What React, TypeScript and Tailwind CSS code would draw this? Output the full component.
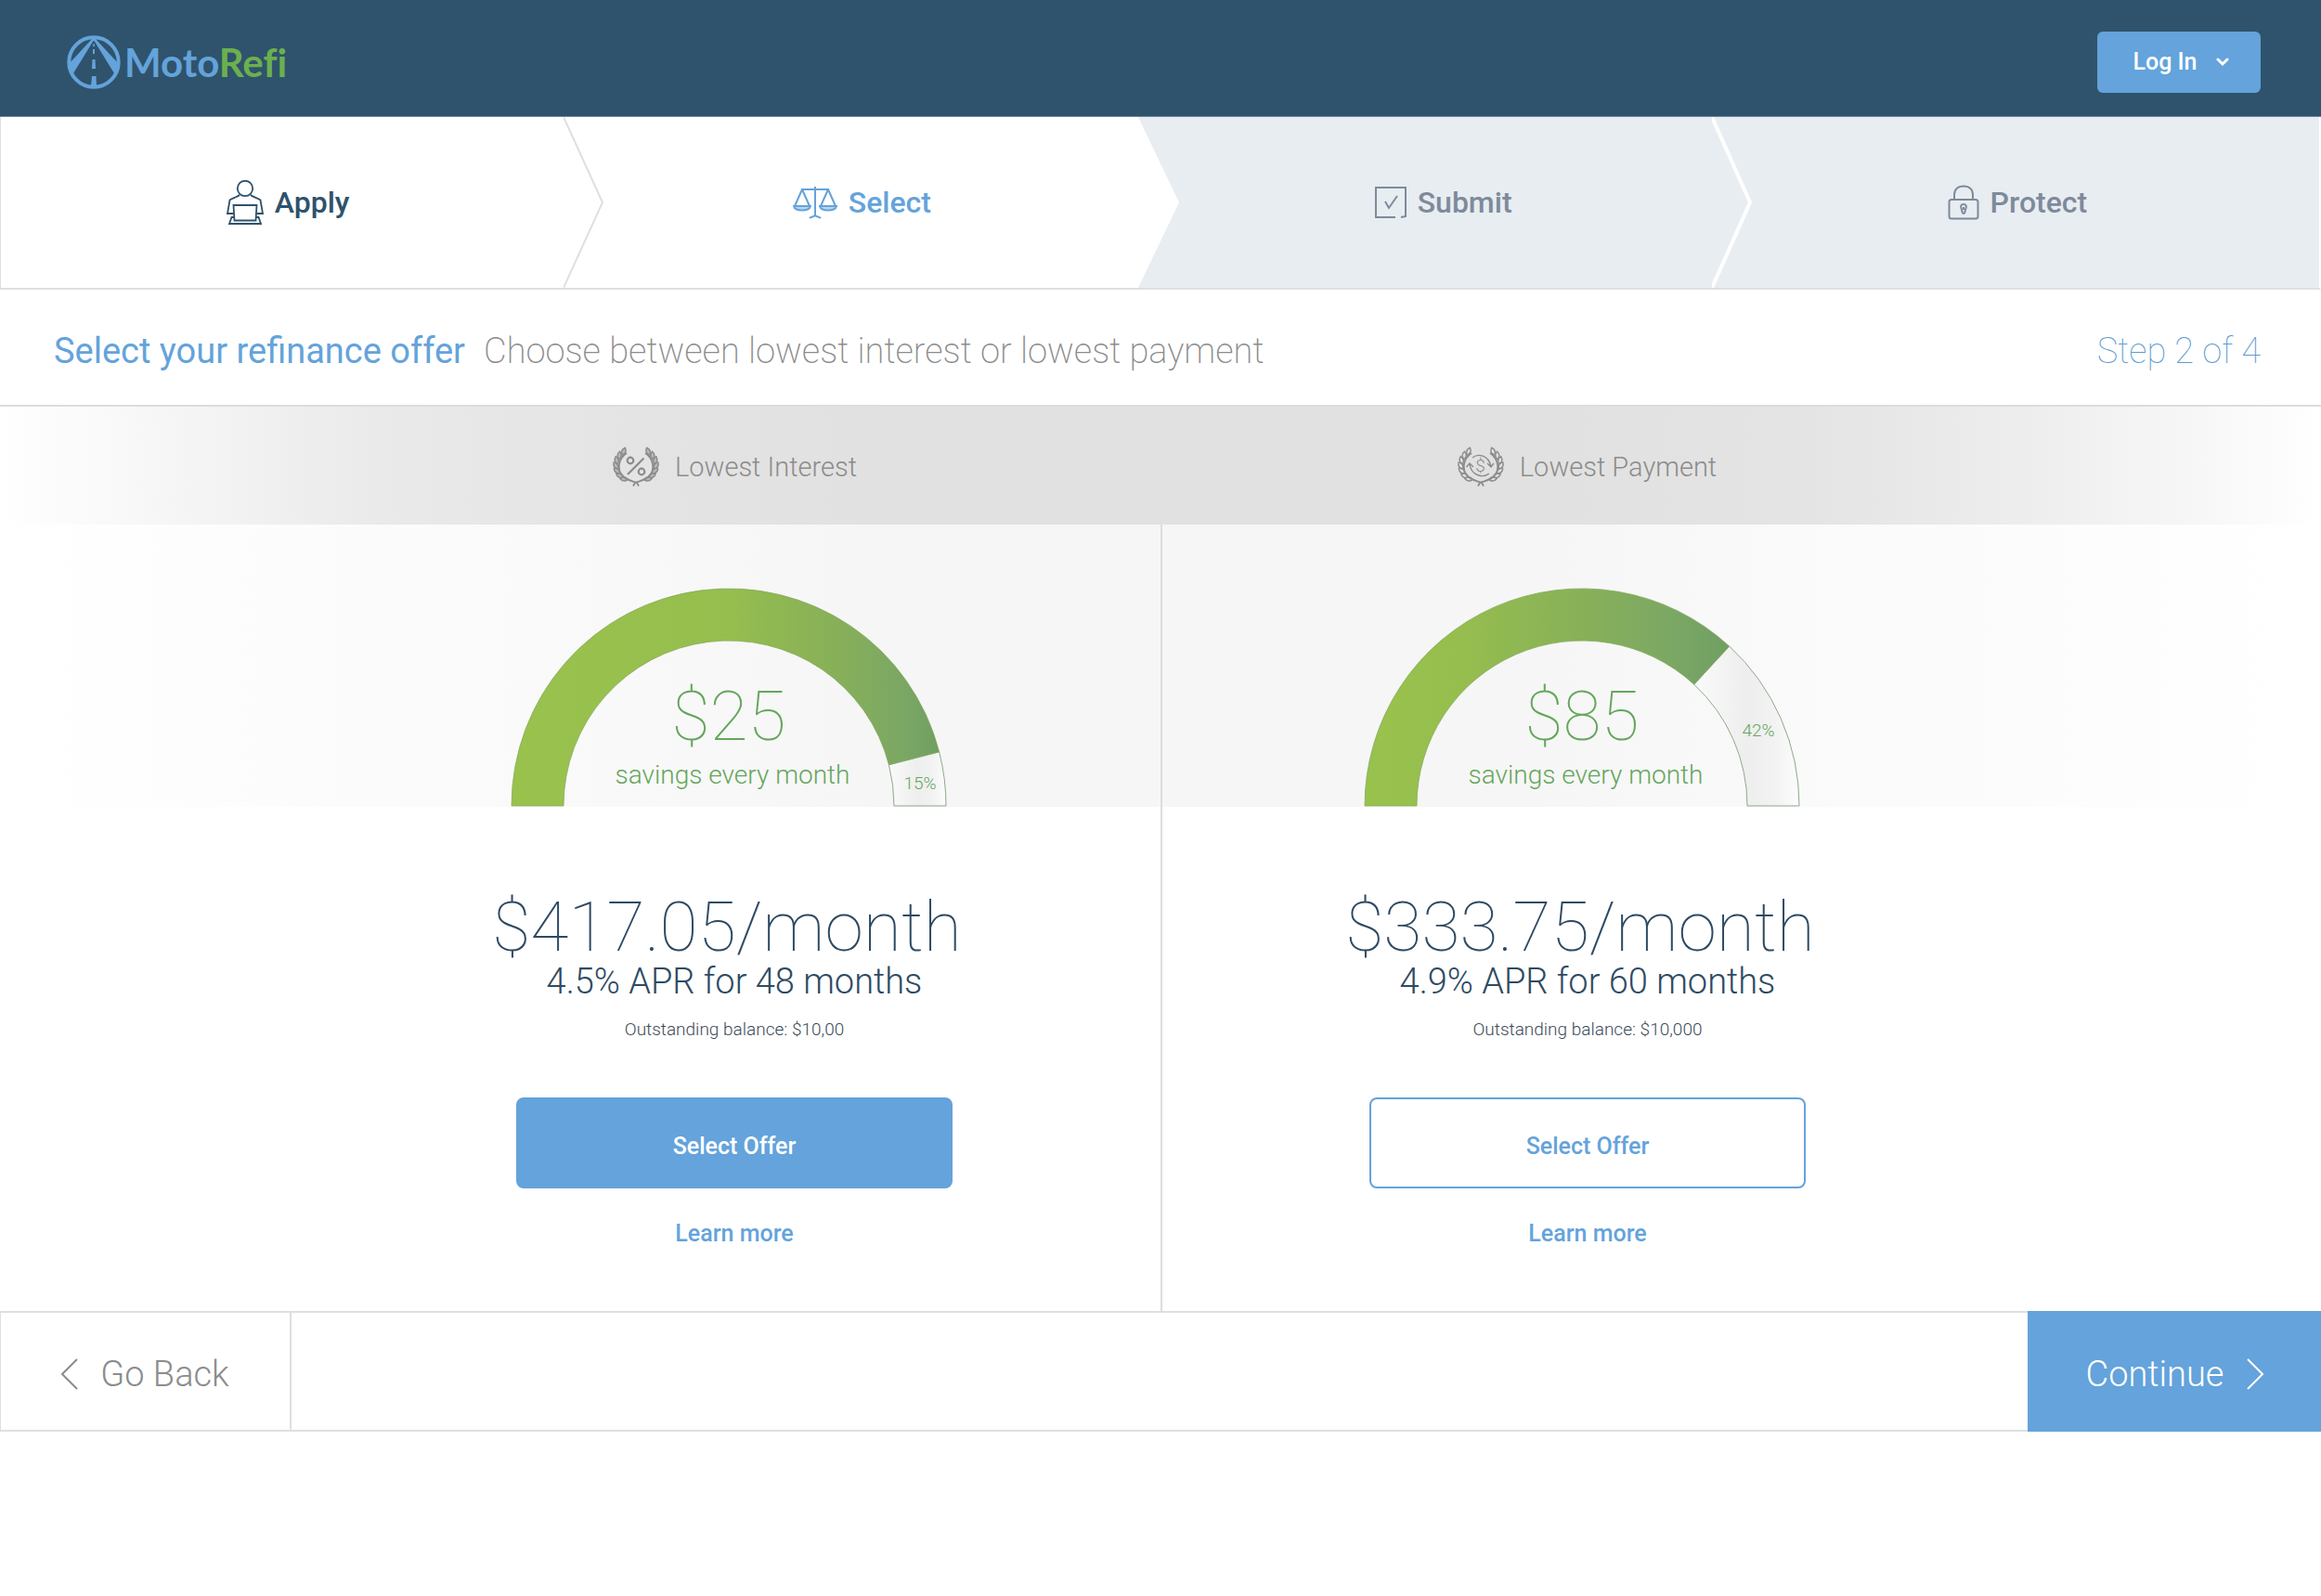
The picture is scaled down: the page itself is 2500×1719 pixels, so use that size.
import type { ReactNode } from 'react';

type Step = {
  label: string;
  icon: ReactNode;
  state: 'done' | 'current' | 'todo';
};

type Offer = {
  id: string;
  title: string;
  badge: 'percent' | 'dollar';
  savings: string;
  rest: { label: string; angle: number; x: number; y: number };
  monthly: string;
  terms: string;
  balance: string;
  primary: boolean;
};

const ApplyIcon = () => (
  <svg width="40" height="48" viewBox="0 0 40 48" fill="none" stroke="currentColor" strokeWidth="1.8" aria-hidden="true">
    <circle cx="20" cy="9" r="8.2" />
    <path d="M14 16 C12 18 5 20 3.5 21.5 L1 36 H7.5 M26 16 C28 18 35 20 36.5 21.5 L39 36 H32.5" />
    <path d="M7.5 27 H32.5 L31.5 43.5 H8.5 Z" />
    <path d="M8 40 H5.5 L3 47 H37 L34.5 40 H32" />
  </svg>
);

const ScalesIcon = () => (
  <svg width="48" height="36" viewBox="0 0 48 36" fill="none" stroke="currentColor" strokeWidth="2" aria-hidden="true">
    <path d="M24 1 V32 M9 4 H39" />
    <path d="M10 4 L2 22 M10 4 L18 22 M38 4 L30 22 M38 4 L46 22" />
    <path d="M1 22 H19 C18 26 14 26.5 10 26.5 C6 26.5 2 26 1 22 Z M29 22 H47 C46 26 42 26.5 38 26.5 C34 26.5 30 26 29 22 Z" fill="currentColor" fillOpacity="0.45" />
    <path d="M18 35 C20 33 22 34 24 32 C26 34 28 33 30 35" />
  </svg>
);

const CheckIcon = () => (
  <svg width="34" height="34" viewBox="0 0 34 34" fill="none" stroke="currentColor" strokeWidth="2" aria-hidden="true">
    <path d="M22 33 H1 V1 H33 V32 L28 33" />
    <path d="M11 16 L15 23 L24 10" />
  </svg>
);

const LockIcon = () => (
  <svg width="34" height="38" viewBox="0 0 34 38" fill="none" stroke="currentColor" strokeWidth="2" aria-hidden="true">
    <rect x="1.5" y="16" width="31" height="20.5" rx="2.5" />
    <path d="M7 16 V11 C7 5 11 1.5 17 1.5 C23 1.5 27 5 27 11 V16" />
    <path d="M17 21 C14.5 21 13.5 23 14.5 25.5 C15.5 27 15 31 17 31 C19 31 18.5 27 19.5 25.5 C20.5 23 19.5 21 17 21 Z M17 24 V27" />
  </svg>
);

const steps: Step[] = [
  { label: 'Apply', icon: <ApplyIcon />, state: 'done' },
  { label: 'Select', icon: <ScalesIcon />, state: 'current' },
  { label: 'Submit', icon: <CheckIcon />, state: 'todo' },
  { label: 'Protect', icon: <LockIcon />, state: 'todo' },
];

const stepStyles = {
  done: 'bg-white text-[#2e526c]',
  current: 'bg-white text-[#64a3db]',
  todo: 'pl-4 text-[#7e8a9b]',
};

const offers: Offer[] = [
  {
    id: 'interest',
    title: 'Lowest Interest',
    badge: 'percent',
    savings: '$25',
    rest: { label: '15%', angle: 14.4, x: 441, y: 217 },
    monthly: '$417.05/month',
    terms: '4.5% APR for 48 months',
    balance: 'Outstanding balance: $10,00',
    primary: true,
  },
  {
    id: 'payment',
    title: 'Lowest Payment',
    badge: 'dollar',
    savings: '$85',
    rest: { label: '42%', angle: 47.3, x: 425, y: 160 },
    monthly: '$333.75/month',
    terms: '4.9% APR for 60 months',
    balance: 'Outstanding balance: $10,000',
    primary: false,
  },
];

const Logo = () => (
  <a href="#" className="flex items-center gap-1" aria-label="MotoRefi home">
    <svg width="58" height="58" viewBox="0 0 58 58" fill="none" stroke="#64a3db" aria-hidden="true">
      <circle cx="29" cy="29" r="26.7" strokeWidth="4" />
      <path d="M27 4 H31 L56 31 L51 41 L29.5 6 H28.5 L7 41 L2 31 Z" fill="#64a3db" stroke="none" />
      <path d="M28.5 9 H29.5 L30 12 H28 Z M28 15 H30 V20 H28 Z M27.5 26 H30.5 L31 36 H27 Z M27 44 H31.5 L32 55 H26 Z" fill="#64a3db" stroke="none" />
    </svg>
    <span className="font-['Lato',sans-serif] text-[42px] leading-[52px] font-bold text-[#64a3db] [font-variant-ligatures:none]">
      Moto<span className="text-[#6bb04f]">Refi</span>
    </span>
  </a>
);

const leafAngles = [128, 146, 164, 182, 200, 218, 234];

// One side of the wreath; the other side is the same drawing mirrored
const Branch = ({ filled }: { filled: boolean }) => (
  <g>
    <path d="M16 6 C7 12 5 24 12 31 C16 35 22 36 27 38 L29 41.5" strokeWidth="1.8" />
    {leafAngles.map(a => {
      const rad = (a * Math.PI) / 180;
      const x = 26 + 21.5 * Math.cos(rad);
      const y = 19 - 18.5 * Math.sin(rad);
      return (
        <path
          key={a}
          d="M0 4 C-3 1 -2.5 -2 0 -4.5 C2.5 -2 3 1 0 4 Z"
          strokeWidth="1.4"
          fill={filled ? 'currentColor' : 'none'}
          fillOpacity="0.5"
          transform={`translate(${x} ${y}) rotate(${150 - a})`}
        />
      );
    })}
  </g>
);

const Wreath = ({ badge }: { badge: Offer['badge'] }) => (
  <svg width="52" height="44" viewBox="0 0 52 44" fill="none" stroke="currentColor" className="overflow-visible" aria-hidden="true">
    <Branch filled={badge === 'percent'} />
    <g transform="translate(52 0) scale(-1 1)">
      <Branch filled={badge === 'percent'} />
    </g>
    {badge === 'percent' ? (
      <g strokeWidth="2.2">
        <circle cx="20" cy="14" r="3.3" />
        <circle cx="32" cy="26" r="3.3" />
        <path d="M34.5 11.5 L17 29" />
      </g>
    ) : (
      <g strokeWidth="1.4">
        <path d="M17 11 C23 6 34 8 37 20 M33 17 L37 21 L40 17" />
        <path d="M35 28 C29 33 16 31 14 18 M10.5 21 L14 17 L18 21" />
        <text x="25.5" y="26" textAnchor="middle" className="font-['Roboto'] text-[19px] font-light" fill="currentColor" stroke="none">$</text>
      </g>
    )}
  </svg>
);

const R = 234;
const INNER = 178;
const CX = 235;
const CY = 235;

const point = (radius: number, angle: number) => {
  const rad = (angle * Math.PI) / 180;
  return `${CX + radius * Math.cos(rad)} ${CY - radius * Math.sin(rad)}`;
};

const ring = (from: number, to: number) =>
  `M${point(R, from)} A${R} ${R} 0 0 1 ${point(R, to)} L${point(INNER, to)} A${INNER} ${INNER} 0 0 0 ${point(INNER, from)} Z`;

// Both arcs run counter-clockwise in the maths sense, so the start is the left end
const Gauge = ({ offer }: { offer: Offer }) => {
  const { label, angle, x, y } = offer.rest;
  return (
    <div className="relative mr-3">
      <svg width="470" height="236" viewBox="0 0 470 236" aria-hidden="true">
        <defs>
          <linearGradient id={`${offer.id}-fill`}>
            <stop offset="0" stopColor="#99c24d" />
            <stop offset={offer.primary ? '0.5' : '0.25'} stopColor="#96be4e" />
            <stop offset={offer.primary ? '0.75' : '0.6'} stopColor="#88b058" />
            <stop offset={offer.primary ? '0.92' : '0.85'} stopColor="#7ba765" />
            <stop offset="1" stopColor="#6f9f62" />
          </linearGradient>
          <linearGradient id={`${offer.id}-rest`}>
            <stop offset="0" stopColor="#fafafa" />
            <stop offset="0.5" stopColor="#eeeeee" />
            <stop offset="0.75" stopColor="#f2f2f2" />
            <stop offset="1" stopColor="#fcfcfc" />
          </linearGradient>
        </defs>
        <path d={ring(angle, 0)} fill={`url(#${offer.id}-rest)`} stroke="#8fa88c" strokeWidth="1" />
        <path d={ring(180, angle)} fill={`url(#${offer.id}-fill)`} stroke="#84ab5c" strokeWidth="0.8" />
        <text x={x} y={y} textAnchor="middle" className="font-['Roboto'] text-[19px] font-light" fill="#64a65c">
          {label}
        </text>
      </svg>
      <div className="absolute inset-x-0 bottom-3.5 flex flex-col items-center text-[#64a65c]">
        <span className="text-[75px] leading-[88px] font-thin">{offer.savings}</span>
        <span className="pl-2 text-[28px] leading-[40px] font-light">savings every month</span>
      </div>
    </div>
  );
};

const OfferDetails = ({ offer }: { offer: Offer }) => (
  <div className="flex flex-col items-center pt-[90px] pb-[67px]">
    <p className="mr-4 text-[75px] leading-[78px] font-thin text-[#2e4a63]">{offer.monthly}</p>
    <p className="text-[38px] leading-[40px] font-light text-[#2e4a63]">{offer.terms}</p>
    <p className="mt-5 text-[19px] leading-[24px] font-light text-[#3d4a57]">{offer.balance}</p>
    <button
      type="button"
      className={`mt-[61px] h-[98px] w-[470px] cursor-pointer rounded-lg border-2 border-[#64a3db] pt-2 text-[25px] font-medium ${
        offer.primary ? 'bg-[#64a3db] text-white' : 'bg-white text-[#64a3db]'
      }`}
    >
      Select Offer
    </button>
    <a href="#" className="mt-[33px] text-[25px] leading-[32px] font-medium text-[#64a3db]">
      Learn more
    </a>
  </div>
);

const App = () => {
  return (
    <div className="min-h-screen bg-white font-['Roboto',sans-serif]">
      <header className="flex h-[126px] items-center justify-between border-b border-[#6b8598] bg-[#2f536c] pt-2 pr-[65px] pl-[72px]">
        <Logo />
        <button
          type="button"
          className="flex h-[66px] w-[176px] cursor-pointer items-center justify-center gap-5 rounded-md bg-[#64a3db] pl-1 text-[25px] font-medium text-white"
        >
          Log In
          <svg width="14" height="10" viewBox="0 0 14 10" fill="none" stroke="currentColor" strokeWidth="3" strokeLinecap="round" aria-hidden="true">
            <path d="M2 2 L7 7 L12 2" />
          </svg>
        </button>
      </header>

      {/* Progress */}
      <ol className="grid grid-cols-4 border-r-2 border-b-2 border-l border-[#dfdfdf] border-r-white bg-[#e8edf1] pr-6">
        {steps.map((step, idx) => (
          <li
            key={step.label}
            className={`relative flex h-[184px] items-center justify-center gap-3 text-[32px] font-medium ${stepStyles[step.state]}`}
            aria-current={step.state === 'current' ? 'step' : undefined}
          >
            {step.icon}
            <span>{step.label}</span>
            {idx < steps.length - 1 && (
              <svg className="absolute top-0 -right-8 z-10" width="44" height="184" viewBox="0 0 44 184" fill="none" aria-hidden="true">
                {step.state === 'done' && <path d="M0 0 L42 92 L0 184" stroke="#dfdfdf" strokeWidth="2" />}
                {step.state === 'current' && (
                  <>
                    <rect width="44" height="184" fill="#e8edf1" />
                    <path d="M0 0 L44 92 L0 184 Z" fill="#ffffff" />
                  </>
                )}
                {step.state === 'todo' && <path d="M0 0 L41 92 L0 184" stroke="#ffffff" strokeWidth="4" />}
              </svg>
            )}
          </li>
        ))}
      </ol>

      <div className="flex h-[126px] items-center justify-between border-b-2 border-[#dcdcdc] pt-2 pr-[65px] pl-[58px] text-[38px]">
        <div className="flex items-baseline gap-5">
          <h1 className="text-[#64a3db]">Select your refinance offer</h1>
          <p className="font-extralight text-[#8c8c8c]">Choose between lowest interest or lowest payment</p>
        </div>
        <p className="font-thin text-[#5b9bd0]">Step 2 of 4</p>
      </div>

      <main>
        <div className="bg-[linear-gradient(to_right,#ffffff_0%,#f5f5f5_8%,#eaeaea_16%,#e4e4e4_27%,#e1e1e1_38%,#e1e1e1_66%,#e4e4e4_78%,#ececec_86%,#f6f6f6_94%,#ffffff_100%)]">
          <div className="mx-auto grid h-[127px] max-w-[1836px] grid-cols-2 pt-1">
            {offers.map(offer => (
              <h2 key={offer.id} className="flex items-center justify-center gap-4 text-[29px] font-light text-[#8c8c8c]">
                <Wreath badge={offer.badge} />
                {offer.title}
              </h2>
            ))}
          </div>
        </div>

        <div className="bg-[linear-gradient(to_right,#ffffff_0%,#fcfcfc_14%,#f9f9f9_26%,#f6f6f6_38%,#f6f6f6_66%,#fafafa_78%,#fdfdfd_90%,#ffffff_100%)] bg-[length:100%_304px] bg-no-repeat">
          <div className="mx-auto grid max-w-[1836px] grid-cols-2">
            {offers.map(offer => (
              <section key={offer.id} className="border-[#dcdcdc] last:border-l-2">
                <div className="flex h-[304px] items-end justify-center">
                  <Gauge offer={offer} />
                </div>
                <OfferDetails offer={offer} />
              </section>
            ))}
          </div>
        </div>
      </main>

      <footer className="flex h-[130px] items-stretch justify-between border-y-2 border-[#dfdfdf] text-[38px] font-light">
        <button type="button" className="flex w-[314px] cursor-pointer items-center justify-center gap-6 border-r-2 border-l border-[#dfdfdf] pt-1.5 text-[#8c8c8c]">
          <svg width="18" height="34" viewBox="0 0 18 34" fill="none" stroke="currentColor" strokeWidth="2" aria-hidden="true">
            <path d="M17 1 L1 17 L17 33" />
          </svg>
          Go Back
        </button>
        <button type="button" className="-my-0.5 flex w-[316px] cursor-pointer items-center justify-center gap-6 bg-[#64a3db] pt-1.5 text-white">
          Continue
          <svg width="18" height="34" viewBox="0 0 18 34" fill="none" stroke="currentColor" strokeWidth="2" aria-hidden="true">
            <path d="M1 1 L17 17 L1 33" />
          </svg>
        </button>
      </footer>
    </div>
  );
};

export default App;
